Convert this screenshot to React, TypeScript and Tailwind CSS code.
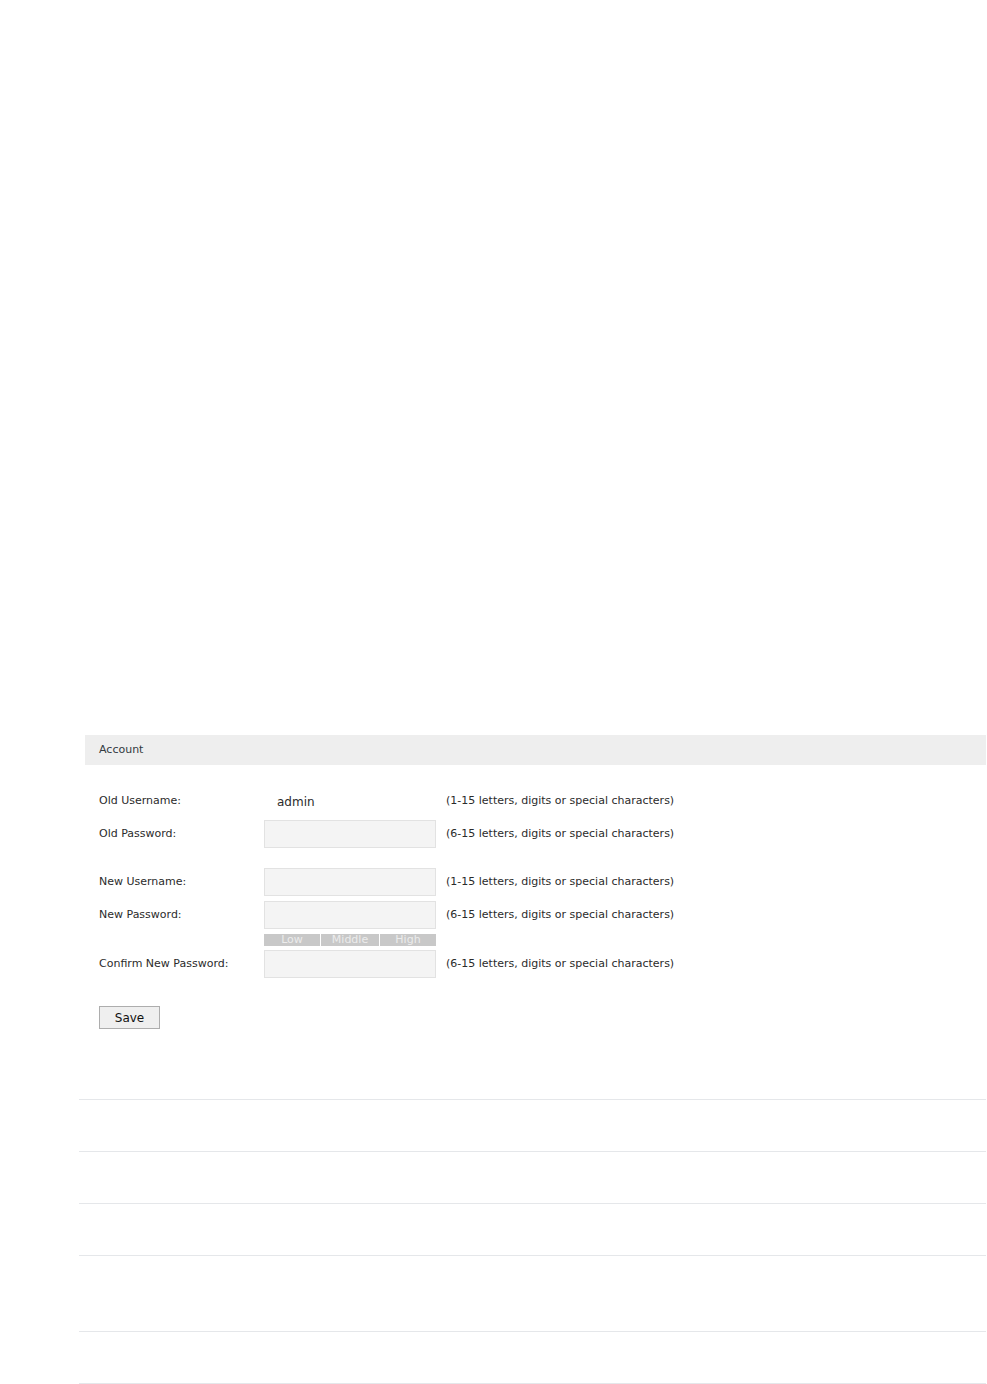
import React from "react";

const font = { fontFamily: '"DejaVu Sans", Tahoma, Verdana, sans-serif' };

function Hint({ text }: { text: string }) {
  return <span className="pl-[10px] pt-[1px] text-[11px] text-[#2b2b2b] whitespace-nowrap">{text}</span>;
}

function Input() {
  return <div className="h-[28px] w-[172px] bg-[#f4f4f4] border border-[#e2e2e2]" />;
}

function Row({ label, children, hint }: { label: string; children: React.ReactNode; hint: string }) {
  return (
    <div className="grid grid-cols-[165px_172px_auto] items-center h-[28px]">
      <span className="pt-[1px] text-[11px] text-[#2b2b2b] whitespace-nowrap">{label}</span>
      {children}
      <Hint text={hint} />
    </div>
  );
}

export default function App() {
  const h1 = "(1-15 letters, digits or special characters)";
  const h6 = "(6-15 letters, digits or special characters)";
  return (
    <div className="w-full bg-white pt-[735px] pb-[1px]" style={font}>
      <div className="ml-[85px] mr-[1px] h-[30px] bg-[#eeeeee] flex items-center pl-[14px] pt-[1px] text-[11px] text-[#333a40]">
        Account
      </div>
      <div className="pl-[99px] pt-[22px] flex flex-col">
        <Row label="Old Username:" hint={h1}>
          <span className="pl-[13px] pt-[1px] text-[12px] text-[#2b2b2b]">admin</span>
        </Row>
        <div className="mt-[5px]">
          <Row label="Old Password:" hint={h6}>
            <Input />
          </Row>
        </div>
        <div className="mt-[20px]">
          <Row label="New Username:" hint={h1}>
            <Input />
          </Row>
        </div>
        <div className="mt-[5px]">
          <Row label="New Password:" hint={h6}>
            <Input />
          </Row>
        </div>
        <div className="mt-[5px] ml-[165px] w-[172px] h-[12px] flex gap-[1px] text-[11px] leading-[12px] text-[#ececec]">
          <div className="w-[56px] bg-[#c8c8c8] text-center">Low</div>
          <div className="w-[58px] bg-[#c8c8c8] text-center">Middle</div>
          <div className="flex-1 bg-[#c8c8c8] text-center">High</div>
        </div>
        <div className="mt-[4px]">
          <Row label="Confirm New Password:" hint={h6}>
            <Input />
          </Row>
        </div>
        <div className="mt-[28px] flex">
          <button className="w-[61px] h-[23px] border border-[#adadad] bg-[#efefef] text-[12px] text-[#111111] leading-none">
            Save
          </button>
        </div>
      </div>
      <div className="ml-[79px] mr-[1px] mt-[70px] flex flex-col">
        <div className="h-[52px] border-t border-[#e5e7ea]" />
        <div className="h-[52px] border-t border-[#e5e7ea]" />
        <div className="h-[52px] border-t border-[#e5e7ea]" />
        <div className="h-[76px] border-t border-[#e5e7ea]" />
        <div className="h-[52px] border-t border-[#e5e7ea]" />
        <div className="h-[1px] border-t border-[#e5e7ea]" />
      </div>
    </div>
  );
}
